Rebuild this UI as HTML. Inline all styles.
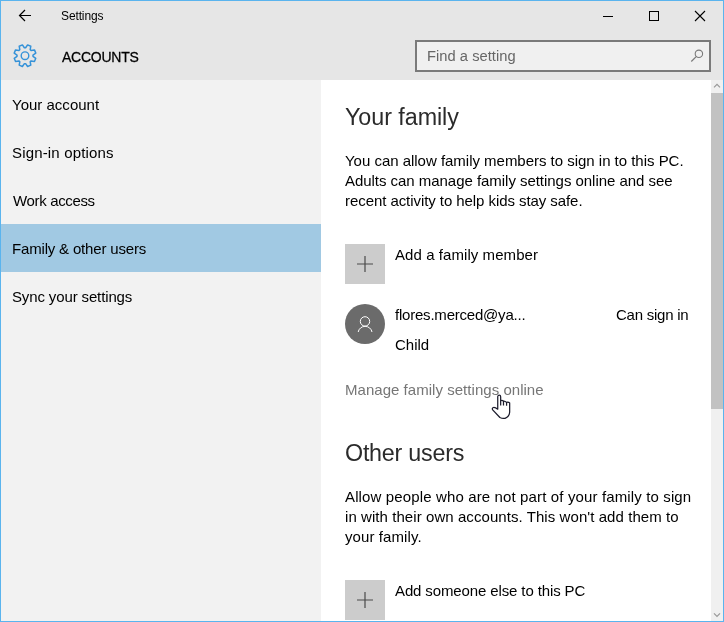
<!DOCTYPE html>
<html><head><meta charset="utf-8">
<style>
*{margin:0;padding:0;box-sizing:border-box}
html,body{width:724px;height:622px;overflow:hidden;background:#e6e6e6}
body{font-family:"Liberation Sans",sans-serif;color:#000;position:relative}
.a{position:absolute}
.t{position:absolute;white-space:nowrap;-webkit-font-smoothing:antialiased;will-change:transform}
</style></head><body>
<div class="a" style="left:1px;top:80px;width:320px;height:541px;background:#f2f2f2"></div>
<div class="a" style="left:1px;top:224px;width:320px;height:48px;background:#a1c9e3"></div>
<div class="a" style="left:321px;top:80px;width:390px;height:541px;background:#fff"></div>
<div class="a" style="left:711px;top:80px;width:12px;height:541px;background:#f0f0f0"></div>
<div class="a" style="left:711px;top:93px;width:12px;height:316px;background:#c2c2c2"></div>
<div class="a" style="left:415px;top:40px;width:296px;height:32px;border:2px solid #7a7a7a;background:#f0f0f0"></div>
<div class="a" style="left:345px;top:244px;width:40px;height:40px;background:#cccccc"></div>
<div class="a" style="left:345px;top:580px;width:40px;height:40px;background:#cccccc"></div>
<div class="a" style="left:345px;top:304px;width:40px;height:40px;border-radius:50%;background:#6b6b6b"></div>
<div class="t" id="settings_0" style="left:61px;top:9.84px;font-size:12px;line-height:12px;color:#000;letter-spacing:-0.123px;">Settings</div>
<div class="t" id="accounts_0" style="left:61.5px;top:49.95px;font-size:14px;line-height:14px;color:#000;letter-spacing:-0.239px;transform:scaleY(1.1);transform-origin:0 11.85px;-webkit-text-stroke:0.25px #000">ACCOUNTS</div>
<div class="t" id="find_0" style="left:427px;top:48.56px;font-size:14.7px;line-height:14.7px;color:#666;letter-spacing:0.033px;">Find a setting</div>
<div class="t" id="nav0_0" style="left:11.8px;top:97.30px;font-size:15px;line-height:15px;color:#000;letter-spacing:0.008px;">Your account</div>
<div class="t" id="nav1_0" style="left:11.8px;top:145.30px;font-size:15px;line-height:15px;color:#000;letter-spacing:0.161px;">Sign-in options</div>
<div class="t" id="nav2_0" style="left:12.8px;top:193.30px;font-size:15px;line-height:15px;color:#000;letter-spacing:-0.347px;">Work access</div>
<div class="t" id="nav3_0" style="left:11.8px;top:241.30px;font-size:15px;line-height:15px;color:#000;letter-spacing:-0.176px;">Family &amp; other users</div>
<div class="t" id="nav4_0" style="left:11.8px;top:289.30px;font-size:15px;line-height:15px;color:#000;letter-spacing:-0.133px;">Sync your settings</div>
<div class="t" id="yourfam_0" style="left:345px;top:106.28px;font-size:23.3px;line-height:23.3px;color:#2b2b2b;letter-spacing:-0.048px;">Your family</div>
<div class="t" id="p1_0" style="left:345px;top:150.80px;font-size:15px;line-height:20px;color:#000;letter-spacing:-0.020px;">You can allow family members to sign in to this PC.</div>
<div class="t" id="p1_1" style="left:345px;top:170.80px;font-size:15px;line-height:20px;color:#000;letter-spacing:-0.038px;">Adults can manage family settings online and see</div>
<div class="t" id="p1_2" style="left:345px;top:190.80px;font-size:15px;line-height:20px;color:#000;letter-spacing:-0.067px;">recent activity to help kids stay safe.</div>
<div class="t" id="addfam_0" style="left:395px;top:247.30px;font-size:15px;line-height:15px;color:#000;letter-spacing:0.070px;">Add a family member</div>
<div class="t" id="flores_0" style="left:395px;top:307.30px;font-size:15px;line-height:15px;color:#000;letter-spacing:-0.213px;">flores.merced@ya...</div>
<div class="t" id="cansign_0" style="left:616px;top:307.30px;font-size:15px;line-height:15px;color:#000;letter-spacing:-0.245px;">Can sign in</div>
<div class="t" id="child_0" style="left:395px;top:336.80px;font-size:15px;line-height:15px;color:#000;letter-spacing:-0.022px;">Child</div>
<div class="t" id="manage_0" style="left:345px;top:381.70px;font-size:15px;line-height:15px;color:#767676;letter-spacing:0.035px;">Manage family settings online</div>
<div class="t" id="other_0" style="left:345px;top:441.78px;font-size:23.3px;line-height:23.3px;color:#2b2b2b;letter-spacing:-0.241px;">Other users</div>
<div class="t" id="p2_0" style="left:345px;top:486.80px;font-size:15px;line-height:20px;color:#000;letter-spacing:0.134px;">Allow people who are not part of your family to sign</div>
<div class="t" id="p2_1" style="left:345px;top:506.80px;font-size:15px;line-height:20px;color:#000;letter-spacing:0.068px;">in with their own accounts. This won't add them to</div>
<div class="t" id="p2_2" style="left:345px;top:526.80px;font-size:15px;line-height:20px;color:#000;letter-spacing:0.094px;">your family.</div>
<div class="t" id="addsome_0" style="left:395px;top:582.70px;font-size:15px;line-height:15px;color:#000;letter-spacing:-0.121px;">Add someone else to this PC</div>
<svg class="a" style="left:0;top:0" width="724" height="622" viewBox="0 0 724 622">
<path d="M19.5 15.5 L31 15.5 M25 10 L19.5 15.5 L25 21" stroke="#000" stroke-width="1.2" fill="none"/>
<path d="M603 16.5 H613" stroke="#000" stroke-width="1"/>
<rect x="649.5" y="11.5" width="9" height="9" stroke="#000" stroke-width="1" fill="none"/>
<path d="M695 11 L705 21 M705 11 L695 21" stroke="#000" stroke-width="1.1"/>
<path d="M32.98 55.07 L35.79 53.11 L34.46 49.90 L31.08 50.50 L30.20 49.62 L30.80 46.24 L27.59 44.91 L25.63 47.72 L24.37 47.72 L22.41 44.91 L19.20 46.24 L19.80 49.62 L18.92 50.50 L15.54 49.90 L14.21 53.11 L17.02 55.07 L17.02 56.33 L14.21 58.29 L15.54 61.50 L18.92 60.90 L19.80 61.78 L19.20 65.16 L22.41 66.49 L24.37 63.68 L25.63 63.68 L27.59 66.49 L30.80 65.16 L30.20 61.78 L31.08 60.90 L34.46 61.50 L35.79 58.29 L32.98 56.33 Z" stroke="#3592d8" stroke-width="1.5" fill="none" stroke-linejoin="round"/>
<circle cx="25" cy="55.7" r="3.8" stroke="#3592d8" stroke-width="1.4" fill="none"/>
<circle cx="698.9" cy="53.8" r="3.7" stroke="#7a7a7a" stroke-width="1.1" fill="none"/>
<path d="M696.2 56.6 L691.3 61.5" stroke="#7a7a7a" stroke-width="1.2"/>
<path d="M357 264 H373 M365 256 V272" stroke="#4a4a4a" stroke-width="1.2"/>
<path d="M357 600 H373 M365 592 V608" stroke="#4a4a4a" stroke-width="1.2"/>
<circle cx="365" cy="321.4" r="4.7" stroke="#fff" stroke-width="1" fill="none"/>
<path d="M358.2 332 A7 6.8 0 0 1 372 332" stroke="#fff" stroke-width="1" fill="none"/>
<path d="M714 87.4 L717 84.4 L720 87.4" stroke="#999" stroke-width="1.2" fill="none"/>
<path d="M714 613.4 L717 616.4 L720 613.4" stroke="#999" stroke-width="1.2" fill="none"/>
<rect x="0.5" y="0.5" width="723" height="621" stroke="#5ab4ee" stroke-width="1" fill="none"/>
<svg x="486" y="390" width="30" height="32" viewBox="0 0 583 622">
<path d="M228 372 L228 130 A28 28 0 0 1 285 130 L285 210 Q312 195 340 215 Q370 210 400 240 Q430 225 460 250 L460 430 Q455 520 370 550 Q320 560 270 535 L130 385 Q110 355 145 340 Q180 335 228 372 Z" fill="#fff" stroke="#1b1b2b" stroke-width="24" stroke-linejoin="round"/>
<path d="M285 210 L285 300 M340 215 L340 300 M400 240 L400 305" stroke="#1b1b2b" stroke-width="24" fill="none" stroke-linecap="butt"/>
</svg>
</svg>
</body></html>
